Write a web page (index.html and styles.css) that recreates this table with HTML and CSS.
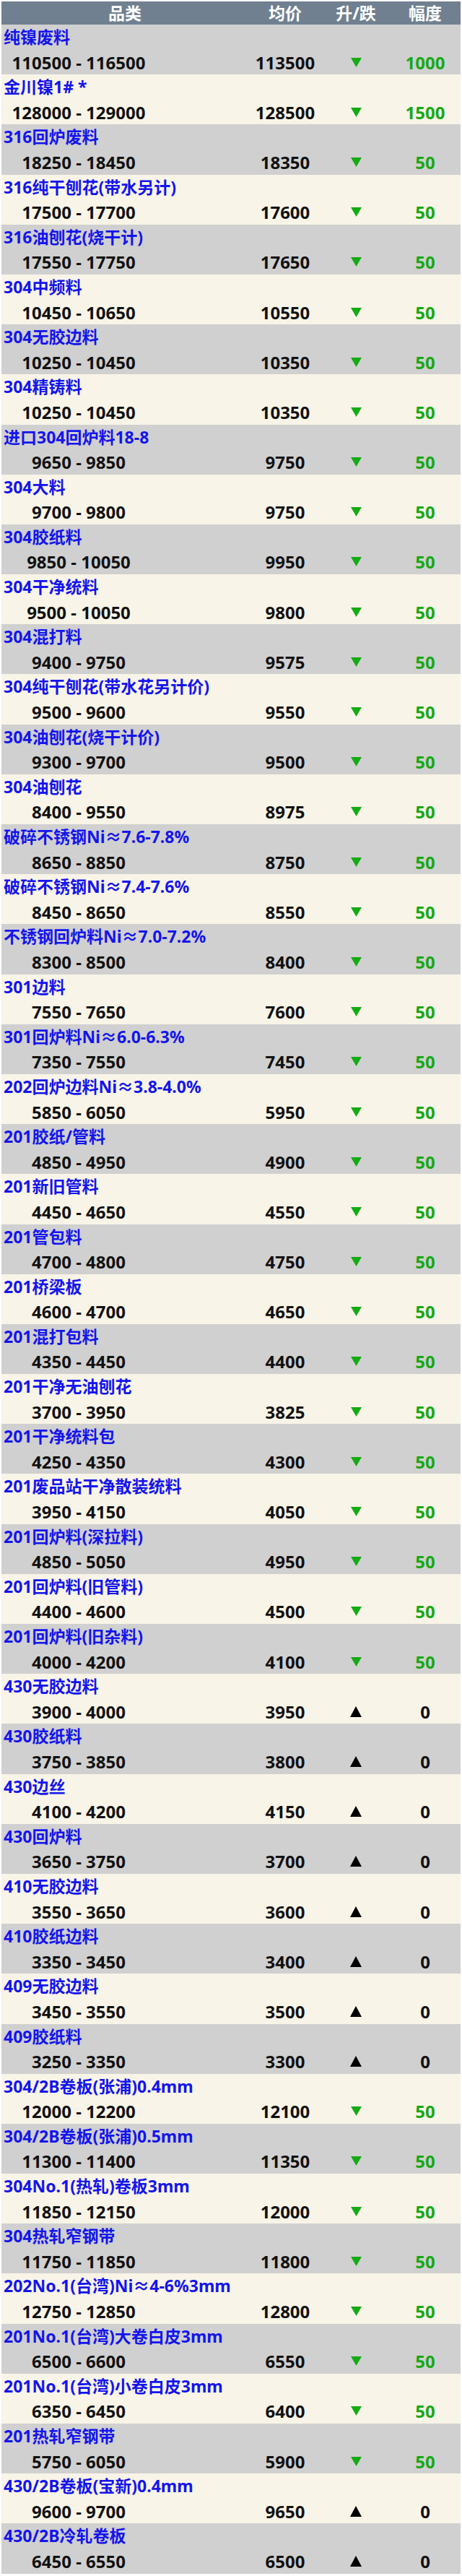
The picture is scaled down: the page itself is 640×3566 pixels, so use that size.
FILE: index.html
```html
<!DOCTYPE html>
<html lang="zh-CN">
<head>
<meta charset="utf-8">
<title>不锈钢废料价格</title>
<link rel="stylesheet" href="styles.css">
</head>
<body>
<div class="table">
  <div class="head">
    <div class="h-cat">品类</div>
    <div class="h-avg">均价</div>
    <div class="h-dir">升/跌</div>
    <div class="h-amt">幅度</div>
  </div>
  <div id="rows"></div>
</div>
<script src="app.js"></script>
</body>
</html>
```
FILE: app.js
```js
var data = [
["纯镍废料","110500 - 116500","113500","d","1000"],
["金川镍1# *","128000 - 129000","128500","d","1500"],
["316回炉废料","18250 - 18450","18350","d","50"],
["316纯干刨花(带水另计)","17500 - 17700","17600","d","50"],
["316油刨花(烧干计)","17550 - 17750","17650","d","50"],
["304中频料","10450 - 10650","10550","d","50"],
["304无胶边料","10250 - 10450","10350","d","50"],
["304精铸料","10250 - 10450","10350","d","50"],
["进口304回炉料18-8","9650 - 9850","9750","d","50"],
["304大料","9700 - 9800","9750","d","50"],
["304胶纸料","9850 - 10050","9950","d","50"],
["304干净统料","9500 - 10050","9800","d","50"],
["304混打料","9400 - 9750","9575","d","50"],
["304纯干刨花(带水花另计价)","9500 - 9600","9550","d","50"],
["304油刨花(烧干计价)","9300 - 9700","9500","d","50"],
["304油刨花","8400 - 9550","8975","d","50"],
["破碎不锈钢Ni≈7.6-7.8%","8650 - 8850","8750","d","50"],
["破碎不锈钢Ni≈7.4-7.6%","8450 - 8650","8550","d","50"],
["不锈钢回炉料Ni≈7.0-7.2%","8300 - 8500","8400","d","50"],
["301边料","7550 - 7650","7600","d","50"],
["301回炉料Ni≈6.0-6.3%","7350 - 7550","7450","d","50"],
["202回炉边料Ni≈3.8-4.0%","5850 - 6050","5950","d","50"],
["201胶纸/管料","4850 - 4950","4900","d","50"],
["201新旧管料","4450 - 4650","4550","d","50"],
["201管包料","4700 - 4800","4750","d","50"],
["201桥梁板","4600 - 4700","4650","d","50"],
["201混打包料","4350 - 4450","4400","d","50"],
["201干净无油刨花","3700 - 3950","3825","d","50"],
["201干净统料包","4250 - 4350","4300","d","50"],
["201废品站干净散装统料","3950 - 4150","4050","d","50"],
["201回炉料(深拉料)","4850 - 5050","4950","d","50"],
["201回炉料(旧管料)","4400 - 4600","4500","d","50"],
["201回炉料(旧杂料)","4000 - 4200","4100","d","50"],
["430无胶边料","3900 - 4000","3950","u","0"],
["430胶纸料","3750 - 3850","3800","u","0"],
["430边丝","4100 - 4200","4150","u","0"],
["430回炉料","3650 - 3750","3700","u","0"],
["410无胶边料","3550 - 3650","3600","u","0"],
["410胶纸边料","3350 - 3450","3400","u","0"],
["409无胶边料","3450 - 3550","3500","u","0"],
["409胶纸料","3250 - 3350","3300","u","0"],
["304/2B卷板(张浦)0.4mm","12000 - 12200","12100","d","50"],
["304/2B卷板(张浦)0.5mm","11300 - 11400","11350","d","50"],
["304No.1(热轧)卷板3mm","11850 - 12150","12000","d","50"],
["304热轧窄钢带","11750 - 11850","11800","d","50"],
["202No.1(台湾)Ni≈4-6%3mm","12750 - 12850","12800","d","50"],
["201No.1(台湾)大卷白皮3mm","6500 - 6600","6550","d","50"],
["201No.1(台湾)小卷白皮3mm","6350 - 6450","6400","d","50"],
["201热轧窄钢带","5750 - 6050","5900","d","50"],
["430/2B卷板(宝新)0.4mm","9600 - 9700","9650","u","0"],
["430/2B冷轧卷板","6450 - 6550","6500","u","0"]
];
var down = '<svg class="tri" width="15" height="13" viewBox="0 0 15 13"><polygon points="0,0 15,0 7.5,13" fill="#14ab14"/></svg>';
var up = '<svg class="tri" width="16" height="15" viewBox="0 0 16 15"><polygon points="8,0 16,15 0,15" fill="#000"/></svg>';
var html = '';
for (var i = 0; i < data.length; i++) {
  var r = data[i];
  var isDown = r[3] === 'd';
  html += '<div class="row ' + (i % 2 === 0 ? 'gray' : 'cream') + '">' +
    '<div class="name">' + r[0] + '</div>' +
    '<div class="data">' +
      '<div class="range">' + r[1] + '</div>' +
      '<div class="spacer"></div>' +
      '<div class="avg">' + r[2] + '</div>' +
      '<div class="dir">' + (isDown ? down : up) + '</div>' +
      '<div class="amt ' + (isDown ? 'green' : 'black') + '">' + r[4] + '</div>' +
    '</div>' +
  '</div>';
}
document.getElementById('rows').innerHTML = html;
```
FILE: styles.css
```css
html, body {
  margin: 0;
  padding: 0;
  background: #ffffff;
}
body {
  font-family: "Noto Sans", "Noto Sans CJK SC", sans-serif;
}
.table {
  width: 636px;
  padding: 2px 2px 3px 2px;
}
.head {
  display: grid;
  grid-template-columns: 342px 102px 94px 98px;
  height: 32px;
  align-items: center;
  background: #708090;
  color: #ffffff;
  font-weight: 700;
  font-size: 23px;
  line-height: 32px;
  text-align: center;
}
.row {
  height: 69.2px;
  display: flex;
  flex-direction: column;
}
.gray { background: #d0d0d0; }
.cream { background: #f8f4e7; }
.name {
  height: 35px;
  line-height: 35px;
  padding-left: 3px;
  color: #1414ee;
  font-size: 23px;
  font-weight: 700;
  white-space: nowrap;
  overflow: hidden;
}
.data {
  flex: 1;
  display: grid;
  grid-template-columns: 214px 128px 102px 94px 98px;
  align-items: center;
  text-align: center;
  font-size: 24px;
  font-weight: 700;
  color: #111111;
  white-space: nowrap;
}
.dir {
  display: flex;
  justify-content: center;
  align-items: center;
}
.tri { display: block; }
.green { color: #16a816; }
.black { color: #111111; }
```
